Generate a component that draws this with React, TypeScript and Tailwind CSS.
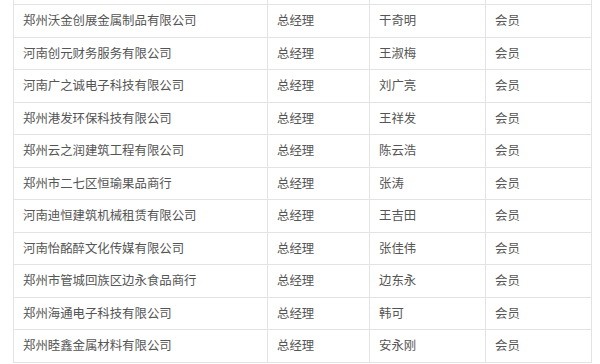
import React from "react";

interface Member {
  company: string;
  title: string;
  name: string;
  role: string;
}

const members: Member[] = [
  { company: "郑州沃金创展金属制品有限公司", title: "总经理", name: "干奇明", role: "会员" },
  { company: "河南创元财务服务有限公司", title: "总经理", name: "王淑梅", role: "会员" },
  { company: "河南广之诚电子科技有限公司", title: "总经理", name: "刘广亮", role: "会员" },
  { company: "郑州港发环保科技有限公司", title: "总经理", name: "王祥发", role: "会员" },
  { company: "郑州云之润建筑工程有限公司", title: "总经理", name: "陈云浩", role: "会员" },
  { company: "郑州市二七区恒瑜果品商行", title: "总经理", name: "张涛", role: "会员" },
  { company: "河南迪恒建筑机械租赁有限公司", title: "总经理", name: "王吉田", role: "会员" },
  { company: "河南怡酩醉文化传媒有限公司", title: "总经理", name: "张佳伟", role: "会员" },
  { company: "郑州市管城回族区边永食品商行", title: "总经理", name: "边东永", role: "会员" },
  { company: "郑州海通电子科技有限公司", title: "总经理", name: "韩可", role: "会员" },
  { company: "郑州睦鑫金属材料有限公司", title: "总经理", name: "安永刚", role: "会员" },
];

const cell = "border border-[#e3e3e3] pl-[9px] align-middle";

export default function App() {
  return (
    <div className="w-[600px] h-[364px] overflow-hidden bg-white pl-[13px] font-['Microsoft_YaHei','Noto_Sans_CJK_SC',sans-serif] text-[12.4px] text-[#555]">
      <table className="border-collapse table-fixed w-[578px]">
        <colgroup>
          <col className="w-[254px]" />
          <col className="w-[102px]" />
          <col className="w-[116px]" />
          <col className="w-[106px]" />
        </colgroup>
        <tbody>
          {/* tail of the row above, cut off by the viewport */}
          <tr className="h-[4.5px]">
            <td className="border-x border-b border-[#e3e3e3] p-0" />
            <td className="border-x border-b border-[#e3e3e3] p-0" />
            <td className="border-x border-b border-[#e3e3e3] p-0" />
            <td className="border-x border-b border-[#e3e3e3] p-0" />
          </tr>
          {members.map((m) => (
            <tr key={m.company} className="h-[32.5px]">
              <td className={cell}>{m.company}</td>
              <td className={cell}>{m.title}</td>
              <td className={cell}>{m.name}</td>
              <td className={cell}>{m.role}</td>
            </tr>
          ))}
        </tbody>
      </table>
    </div>
  );
}
